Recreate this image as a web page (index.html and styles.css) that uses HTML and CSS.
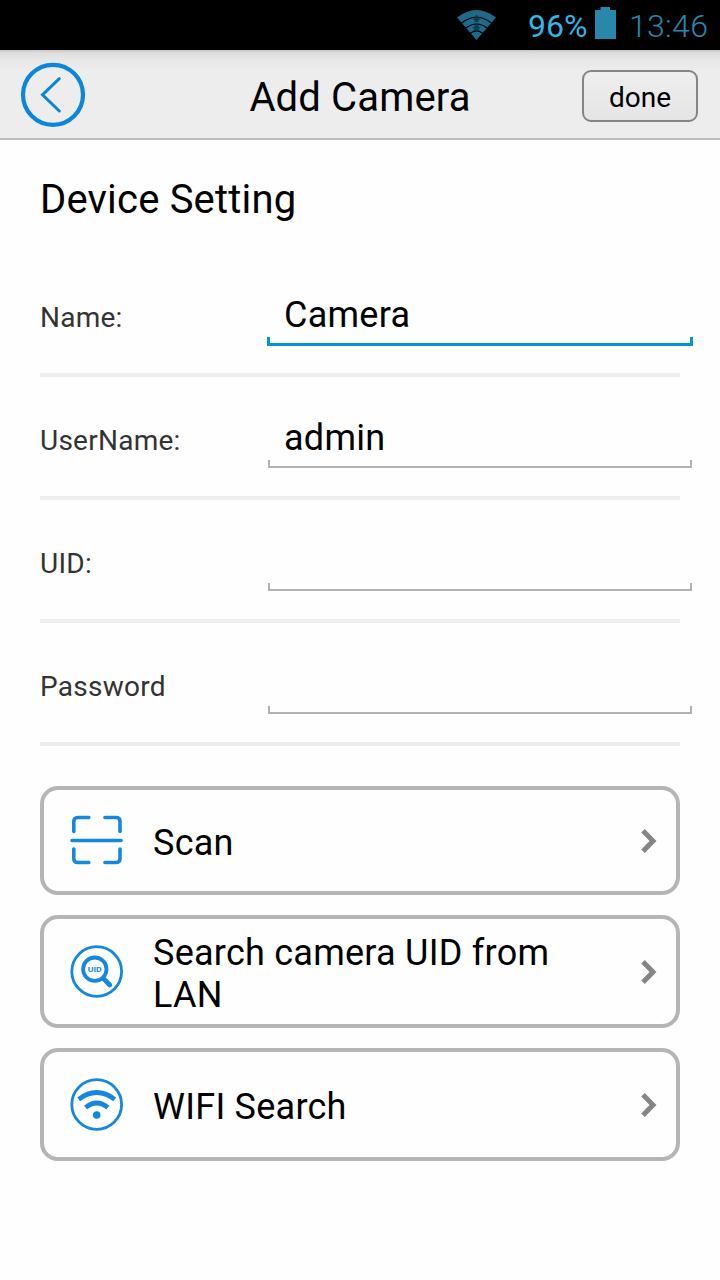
FILE: index.html
```html
<!DOCTYPE html>
<html lang="en">
<head>
<meta charset="utf-8">
<title>Add Camera</title>
<link rel="stylesheet" href="styles.css">
</head>
<body>
<div class="status">
  <svg class="signal" width="40" height="32" viewBox="0 0 40 32">
    <path d="M19.500 31 0 8.500Q19.500-6.500 39 8.500Z" fill="#1f6a88"/>
    <path d="M4.500 14Q19.500 2.500 34.500 14M9 19Q19.500 11 30 19M13.500 24.200Q19.500 19.500 25.500 24.200" fill="none" stroke="#000" stroke-width="1.200"/>
    <path d="M19.500 5.500l4 5.500h-2v2h-4v-2h-2zM19.500 23.500l4-5.500h-2v-2h-4v2h-2z" fill="#0b3547" fill-opacity=".85"/>
  </svg>
  <span class="percent">96%</span>
  <svg class="battery" width="21" height="32" viewBox="0 0 21 32"><path d="M0 3h5.500V0h9.500v3h6v29H0z" fill="#2888ac"/></svg>
  <span class="clock">13:46</span>
</div>
<header class="header">
  <button class="back" aria-label="Back">
    <svg width="66" height="66" viewBox="0 0 66 66" fill="none" stroke="#0b86db">
      <circle cx="33" cy="32.800" r="30" stroke-width="4.200"/>
      <path d="M39.300 16.700 22.500 32.800l16.800 16.200" stroke-width="3" stroke-linecap="round"/>
    </svg>
  </button>
  <h1 class="title">Add Camera</h1>
  <button class="done">done</button>
</header>
<main class="main">
  <h2 class="heading">Device Setting</h2>
  <div class="row"><span class="label">Name:</span><div class="field focused">Camera</div></div>
  <div class="row"><span class="label">UserName:</span><div class="field">admin</div></div>
  <div class="row"><span class="label">UID:</span><div class="field"></div></div>
  <div class="row"><span class="label">Password</span><div class="field"></div></div>
  <div class="actions">
    <button class="action scan">
      <svg class="icon" width="54" height="54" viewBox="0 0 54 54" fill="none" stroke="#1488dc" stroke-width="3.600" stroke-linecap="round">
        <path d="M3.800 17.500V7.500q0-4 4-4h11M35 3.500h11q4 0 4 4v10M3.800 35v9.500q0 4 4 4h11M35 48.500h11q4 0 4-4V35M2 26.500h49"/>
      </svg>
      <span class="text">Scan</span>
      <svg class="arrow" width="18" height="26" viewBox="0 0 18 26"><path d="M3 2.800 13 13 3 23.200" fill="none" stroke="#858585" stroke-width="5"/></svg>
    </button>
    <button class="action">
      <svg class="icon" width="54" height="54" viewBox="0 0 54 54" fill="none" stroke="#1488dc">
        <circle cx="26.700" cy="26.500" r="24.900" stroke-width="2.800"/>
        <circle cx="24.800" cy="24.200" r="11.700" stroke-width="3.800"/>
        <path d="M33.300 33.300 39.800 40" stroke-width="4.800" stroke-linecap="round"/>
        <text class="uid" x="24.800" y="27" text-anchor="middle" textLength="14" lengthAdjust="spacingAndGlyphs">UID</text>
      </svg>
      <span class="text">Search camera UID from<br>LAN</span>
      <svg class="arrow" width="18" height="26" viewBox="0 0 18 26"><path d="M3 2.800 13 13 3 23.200" fill="none" stroke="#858585" stroke-width="5"/></svg>
    </button>
    <button class="action">
      <svg class="icon" width="54" height="54" viewBox="0 0 54 54" fill="none" stroke="#1488dc">
        <circle cx="26.700" cy="26.500" r="24.900" stroke-width="2.800"/>
        <path d="M8.700 21.300Q26.700 7.700 44.700 21.300M15.500 29.500Q26.700 20.300 37.900 29.500" stroke-width="4.800"/>
        <circle cx="26.700" cy="37" r="3.800" fill="#1488dc" stroke="none"/>
      </svg>
      <span class="text">WIFI Search</span>
      <svg class="arrow" width="18" height="26" viewBox="0 0 18 26"><path d="M3 2.800 13 13 3 23.200" fill="none" stroke="#858585" stroke-width="5"/></svg>
    </button>
  </div>
</main>
</body>
</html>
```
FILE: styles.css
```css
* { box-sizing: border-box; }
body { margin: 0; background: #fefefe; color: #000; font-family: Roboto, sans-serif; height: 1280px; overflow: hidden; }
button { font: inherit; color: inherit; margin: 0; padding: 0; border: 0; background: none; }
svg { display: block; flex: none; }
h1, h2 { margin: 0; font-weight: 400; }
.status { height: 50px; background: #000; display: flex; align-items: flex-start; padding-left: 457px; font-size: 32px; line-height: 38px; white-space: nowrap; }
.signal { margin-top: 9px; }
.percent { margin: 7px 0 0 31px; width: 67px; color: #33b5e5; }
.battery { margin-top: 7px; }
.clock { margin: 7px 0 0 13px; color: #2888ac; font-weight: 300; letter-spacing: 0.3px; }
.header { height: 90px; display: grid; grid-template-columns: 138px 1fr 138px; align-items: start; border-bottom: 2px solid #bdbdbd; background: linear-gradient(#c4c4c4 0, #dedede 3px, #e7e7e7 10px, #ededed 22px); }
.back { margin: 12px 0 0 20px; width: 66px; }
.title { margin-top: 24px; text-align: center; font-size: 40px; line-height: 48px; letter-spacing: 0.15px; }
.done { width: 116px; height: 52px; margin-top: 20px; padding-top: 3px; border: 2.500px solid #858585; border-radius: 9px; background: linear-gradient(#eee, #e5e5e5); font-size: 28px; }
.main { padding: 0 40px; }
.heading { height: 114px; padding-top: 36px; font-size: 40px; line-height: 48px; letter-spacing: 0.18px; }
.row { height: 123px; border-bottom: 4px solid #eee; display: grid; grid-template-columns: 228px 424px; }
.label { padding-top: 47px; font-size: 28px; line-height: 33px; letter-spacing: 0.25px; color: #333; }
.field { height: 55px; margin-top: 36px; padding: 4px 0 0 16px; font-size: 36px; line-height: 42px; letter-spacing: 0.25px; background: linear-gradient(#b2b2b2, #b2b2b2) bottom / 100% 2px no-repeat, linear-gradient(#b2b2b2, #b2b2b2) left bottom / 2px 8px no-repeat, linear-gradient(#b2b2b2, #b2b2b2) right bottom / 2px 8px no-repeat; }
.focused { width: 426px; height: 56px; margin-left: -1px; padding-left: 17px; background: linear-gradient(#0099cc, #0099cc) bottom / 100% 3px no-repeat, linear-gradient(#0099cc, #0099cc) left bottom / 3px 9px no-repeat, linear-gradient(#0099cc, #0099cc) right bottom / 3px 9px no-repeat; }
.actions { display: flex; flex-direction: column; gap: 20px; padding-top: 40px; }
.action { height: 113px; border: 4px solid #b5b5b5; border-radius: 18px; display: flex; align-items: center; padding: 0 18px 0 26px; text-align: left; }
.scan { height: 109px; }
.text { flex: 1; margin-left: 29px; padding-top: 5px; font-size: 36px; line-height: 42px; letter-spacing: 0.25px; white-space: nowrap; }
.uid { font: 700 8px Roboto, sans-serif; fill: #1488dc; stroke: none; }
```
